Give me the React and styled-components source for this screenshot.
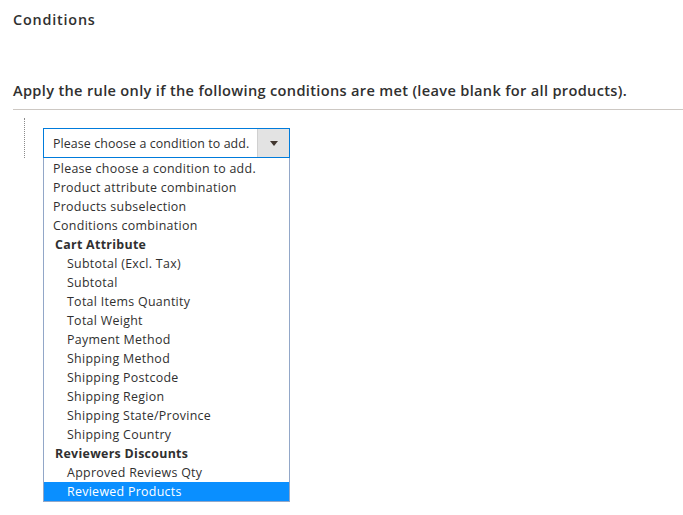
import React from 'react';
import styled, { createGlobalStyle } from 'styled-components';

const GlobalStyle = createGlobalStyle`
	body {
		margin: 0;
		background: #ffffff;
		font-family: "Open Sans", "Noto Sans", sans-serif;
		color: #303030;
	}
`;

const options = [
	{ label: 'Please choose a condition to add.' },
	{ label: 'Product attribute combination' },
	{ label: 'Products subselection' },
	{ label: 'Conditions combination' },
	{ label: 'Cart Attribute', group: true },
	{ label: 'Subtotal (Excl. Tax)', nested: true },
	{ label: 'Subtotal', nested: true },
	{ label: 'Total Items Quantity', nested: true },
	{ label: 'Total Weight', nested: true },
	{ label: 'Payment Method', nested: true },
	{ label: 'Shipping Method', nested: true },
	{ label: 'Shipping Postcode', nested: true },
	{ label: 'Shipping Region', nested: true },
	{ label: 'Shipping State/Province', nested: true },
	{ label: 'Shipping Country', nested: true },
	{ label: 'Reviewers Discounts', group: true },
	{ label: 'Approved Reviews Qty', nested: true },
	{ label: 'Reviewed Products', nested: true, selected: true },
];

const App = () => {
	return (
		<>
			<GlobalStyle />
			<Page>
				<Title>Conditions</Title>
				<Legend>Apply the rule only if the following conditions are met (leave blank for all products).</Legend>
				<Tree>
					<Branch />
					<SelectHolder>
						<Select>
							<SelectValue>Please choose a condition to add.</SelectValue>
							<ArrowBox>
								<Arrow />
							</ArrowBox>
						</Select>
						<List>
							{options.map(opt => (
								<Option
									key={opt.label}
									$group={opt.group}
									$nested={opt.nested}
									$selected={opt.selected}
								>
									{opt.label}
								</Option>
							))}
						</List>
					</SelectHolder>
				</Tree>
			</Page>
		</>
	);
};

const Page = styled.div`
	padding: 10px 0 0 13px;
`;

const Title = styled.h2`
	margin: 0;
	font-size: 14.4px;
	line-height: 19px;
	font-weight: 600;
	letter-spacing: 0.8px;
	color: #303030;
`;

const Legend = styled.div`
	margin-top: 51px;
	padding-bottom: 9px;
	border-bottom: 1px solid #cdc8c3;
	font-size: 14.6px;
	line-height: 20px;
	font-weight: 600;
	letter-spacing: 0.32px;
	color: #303030;
`;

const Tree = styled.div`
	display: flex;
	align-items: flex-start;
	padding-top: 8px;
`;

const Branch = styled.div`
	width: 0;
	height: 40px;
	margin-left: 11px;
	border-left: 1px dotted #8a8a8a;
`;

const SelectHolder = styled.div`
	margin-left: 18px;
	margin-top: 10px;
	width: 247px;
`;

const Select = styled.div`
	display: flex;
	height: 28px;
	border: 1px solid #007bdb;
	box-sizing: content-box;
`;

const SelectValue = styled.div`
	flex: 1;
	padding-left: 9px;
	font-size: 12.4px;
	line-height: 29px;
	letter-spacing: 0.1px;
	color: #303030;
	white-space: nowrap;
	overflow: hidden;
`;

const ArrowBox = styled.div`
	width: 31px;
	display: flex;
	align-items: center;
	justify-content: center;
	background: #e3e3e3;
	border-left: 1px solid #d0d0d0;
`;

const Arrow = styled.span`
	width: 0;
	height: 0;
	border-left: 4px solid transparent;
	border-right: 4px solid transparent;
	border-top: 5px solid #41362f;
`;

const List = styled.div`
	display: flex;
	flex-direction: column;
	border: 1px solid #92a7c8;
	border-top: none;
	padding-top: 1px;
`;

const Option = styled.div`
	height: 19px;
	line-height: 19px;
	font-size: 12.4px;
	letter-spacing: 0.3px;
	white-space: nowrap;
	padding-left: ${props => (props.$nested ? 23 : props.$group ? 11 : 9)}px;
	font-weight: ${props => (props.$group ? 700 : 400)};
	color: ${props => (props.$selected ? '#ffffff' : '#303030')};
	background: ${props => (props.$selected ? '#0a8fff' : 'transparent')};
`;

export default App;
